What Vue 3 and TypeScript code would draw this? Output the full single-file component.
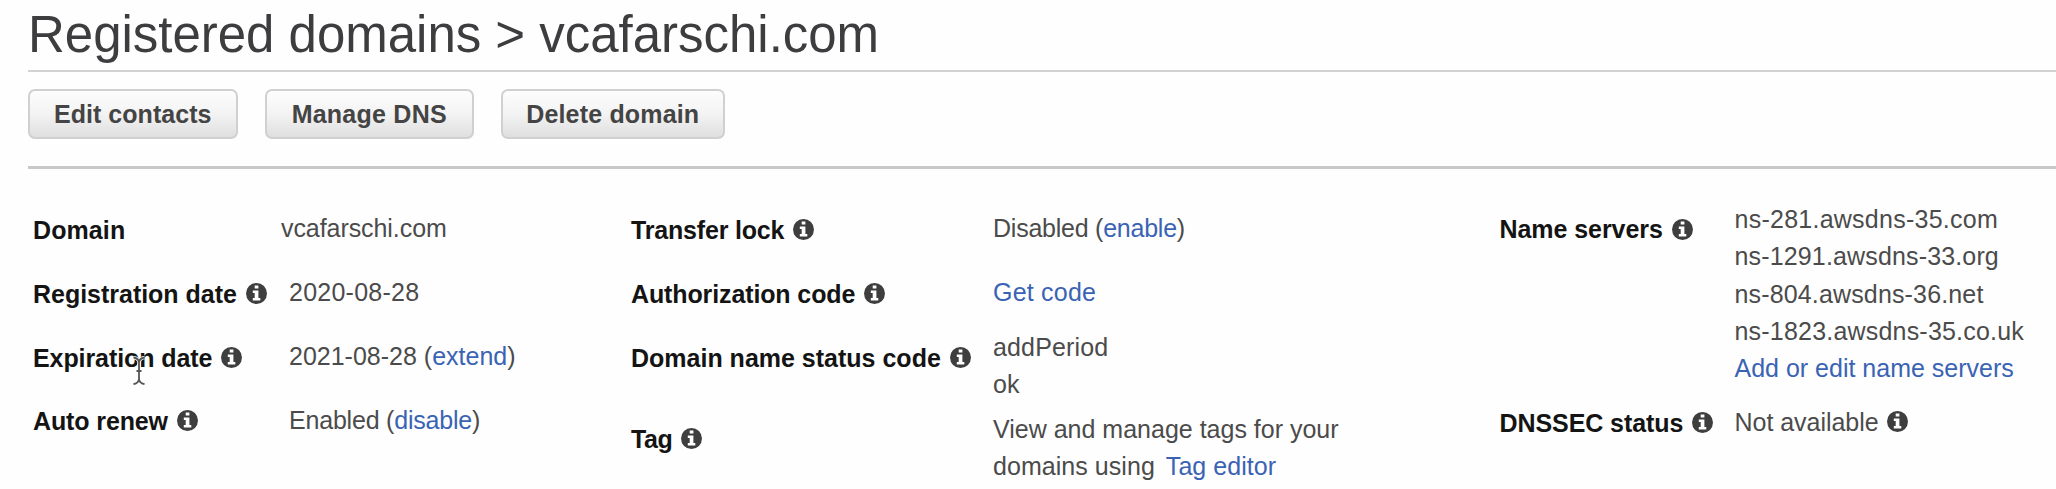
<script setup lang="ts">
interface Part { text: string; link?: boolean; gap?: boolean }
interface Line { parts: Part[]; ls?: number; info?: boolean }
interface Field { label: string; ls?: number; info: boolean; key: string; lines: Line[] }
interface Group { name: string; fields: Field[] }

const actions = [
  { text: 'Edit contacts', key: 'edit', ls: 0.04 },
  { text: 'Manage DNS', key: 'dns', ls: 0.24 },
  { text: 'Delete domain', key: 'delete', ls: 0.17 },
]

const groups: Group[] = [
  {
    name: 'general',
    fields: [
      { label: 'Domain', ls: 0.1, info: false, key: 'domain', lines: [{ parts: [{ text: 'vcafarschi.com' }], ls: -0.07 }] },
      { label: 'Registration date', ls: -0.02, info: true, key: 'registered', lines: [{ parts: [{ text: '2020-08-28' }], ls: 0.25 }] },
      { label: 'Expiration date', ls: -0.08, info: true, key: 'expires', lines: [{ parts: [{ text: '2021-08-28 (' }, { text: 'extend', link: true }, { text: ')' }] }] },
      { label: 'Auto renew', ls: -0.12, info: true, key: 'renew', lines: [{ parts: [{ text: 'Enabled (' }, { text: 'disable', link: true }, { text: ')' }], ls: -0.2 }] },
    ],
  },
  {
    name: 'transfer',
    fields: [
      { label: 'Transfer lock', ls: -0.18, info: true, key: 'lock', lines: [{ parts: [{ text: 'Disabled (' }, { text: 'enable', link: true }, { text: ')' }], ls: -0.24 }] },
      { label: 'Authorization code', ls: -0.12, info: true, key: 'auth', lines: [{ parts: [{ text: 'Get code', link: true }], ls: 0.22 }] },
      { label: 'Domain name status code', info: true, key: 'status', lines: [{ parts: [{ text: 'addPeriod' }], ls: 0.14 }, { parts: [{ text: 'ok' }], ls: 0.1 }] },
      { label: 'Tag', ls: -0.4, info: true, key: 'tag', lines: [{ parts: [{ text: 'View and manage tags for your' }] }, { parts: [{ text: 'domains using' }, { text: 'Tag editor', link: true, gap: true }], ls: 0.05 }] },
    ],
  },
  {
    name: 'servers',
    fields: [
      {
        label: 'Name servers', ls: -0.06, info: true, key: 'ns',
        lines: [
          { parts: [{ text: 'ns-281.awsdns-35.com' }], ls: 0.25 },
          { parts: [{ text: 'ns-1291.awsdns-33.org' }], ls: 0.15 },
          { parts: [{ text: 'ns-804.awsdns-36.net' }], ls: 0.15 },
          { parts: [{ text: 'ns-1823.awsdns-35.co.uk' }], ls: 0.2 },
          { parts: [{ text: 'Add or edit name servers', link: true }] },
        ],
      },
      { label: 'DNSSEC status', ls: -0.08, info: true, key: 'dnssec', lines: [{ parts: [{ text: 'Not available' }], info: true, ls: -0.03 }] },
    ],
  },
]

const spacing = (ls?: number) => ({ letterSpacing: `${ls ?? 0}px` })
</script>

<template>
  <main class="page">
    <h1 class="title">Registered domains &gt; vcafarschi.com</h1>
    <nav class="toolbar">
      <button v-for="a in actions" :key="a.key" type="button" class="button" :class="a.key" :style="spacing(a.ls)">{{ a.text }}</button>
    </nav>
    <section class="details">
      <dl v-for="g in groups" :key="g.name" class="group" :class="g.name">
        <div v-for="f in g.fields" :key="f.key" class="field" :class="f.key">
          <dt class="label">
            <span :style="spacing(f.ls)">{{ f.label }}</span>
            <svg v-if="f.info" class="info" viewBox="0 0 21 21" aria-hidden="true">
              <circle cx="10.5" cy="10.5" r="10.5" />
              <path d="M8.7 2.4h3.7v3.2H8.7zM6.8 7.4h5.6v7.6h1.9v2.6H6.8V15h1.9V10H6.8z" />
            </svg>
          </dt>
          <dd class="value">
            <div v-for="(l, i) in f.lines" :key="i" class="line" :style="spacing(l.ls)">
              <template v-for="p in l.parts" :key="p.text"><a v-if="p.link" class="link" :class="{ gap: p.gap }">{{ p.text }}</a><span v-else class="text">{{ p.text }}</span></template>
              <svg v-if="l.info" class="info" viewBox="0 0 21 21" aria-hidden="true">
                <circle cx="10.5" cy="10.5" r="10.5" />
                <path d="M8.7 2.4h3.7v3.2H8.7zM6.8 7.4h5.6v7.6h1.9v2.6H6.8V15h1.9V10H6.8z" />
              </svg>
            </div>
          </dd>
        </div>
      </dl>
    </section>
    <svg class="cursor" viewBox="0 0 14 30" aria-hidden="true">
      <path class="halo" d="M1.5 1.5Q6 2 7 6Q8 2 12.5 1.5M7 6v18M4.5 15h5M1.5 28Q6 27.5 7 23.5Q8 27.5 12.5 28" />
      <path class="beam" d="M1.5 1.5Q6 2 7 6Q8 2 12.5 1.5M7 6v18M4.5 15h5M1.5 28Q6 27.5 7 23.5Q8 27.5 12.5 28" />
    </svg>
  </main>
</template>

<style>
body {
  margin: 0;
  background: #fefefe;
}
</style>

<style scoped>
.page {
  position: relative;
  box-sizing: border-box;
  width: 2056px;
  height: 489px;
  padding-left: 28px;
  overflow: hidden;
  background: #fefefe;
  color: #4b4b4b;
  font-family: "Liberation Sans", Arial, sans-serif;
  font-size: 25px;
}
.title {
  box-sizing: border-box;
  height: 72px;
  margin: 0;
  padding-top: 6px;
  border-bottom: 2px solid #d2d2d2;
  color: #3d3d3f;
  font-size: 51px;
  font-weight: 400;
  line-height: 58px;
  letter-spacing: -0.02px;
  white-space: nowrap;
}
.toolbar {
  display: flex;
  box-sizing: border-box;
  height: 97px;
  padding-top: 17px;
  gap: 27px;
  border-bottom: 3px solid #c9c9c9;
}
.button {
  box-sizing: border-box;
  width: 209.5px;
  height: 50px;
  padding: 1px 0 0;
  border: 2px solid #d0d0d0;
  border-radius: 7px;
  background: linear-gradient(#fdfdfd, #f3f3f3 50%, #dfdfdf);
  color: #444;
  font: bold 25px "Liberation Sans", Arial, sans-serif;
  white-space: nowrap;
}
.button.delete {
  width: 223.5px;
}
.details {
  display: flex;
  padding-left: 5px;
}
.group {
  flex: none;
  margin: 0;
}
.general {
  width: 598px;
  padding-top: 40.5px;
}
.transfer {
  width: 868.5px;
  padding-top: 40.5px;
}
.servers {
  padding-top: 32px;
}
.field {
  display: flex;
  height: 64px;
}
.label {
  display: flex;
  flex: none;
  gap: 9px;
  height: 37.33px;
  padding-top: 2px;
  color: #141414;
  font-weight: 700;
  line-height: 37.33px;
  white-space: nowrap;
}
.general .label {
  width: 256px;
}
.transfer .label {
  width: 362px;
}
.servers .label {
  width: 235px;
}
.value {
  margin: 0;
  line-height: 37.33px;
  white-space: nowrap;
}
.line {
  display: flex;
  height: 37.33px;
  white-space: pre;
}
.link {
  color: #3a63b4;
}
.link.gap {
  margin-left: 11px;
}
.info {
  flex: none;
  width: 21px;
  height: 21px;
  margin-top: 7.5px;
}
.info circle {
  fill: #3e3e3e;
}
.info path {
  fill: #fff;
}
.line .info {
  margin-left: 8.5px;
}
.domain .value {
  margin-left: -8px;
}
.renew .label,
.dnssec .label {
  padding-top: 1px;
}
.auth {
  height: 55px;
}
.status {
  height: 82px;
}
.status .label {
  padding-top: 11px;
}
.tag .label {
  padding-top: 10px;
}
.ns {
  height: 202.5px;
}
.ns .label {
  padding-top: 10.4px;
}
.cursor {
  position: absolute;
  top: 356px;
  left: 132px;
  width: 14px;
  height: 30px;
  fill: none;
}
.halo {
  stroke: #fff;
  stroke-width: 3.4;
}
.beam {
  stroke: #555;
  stroke-width: 1.8;
}
</style>
